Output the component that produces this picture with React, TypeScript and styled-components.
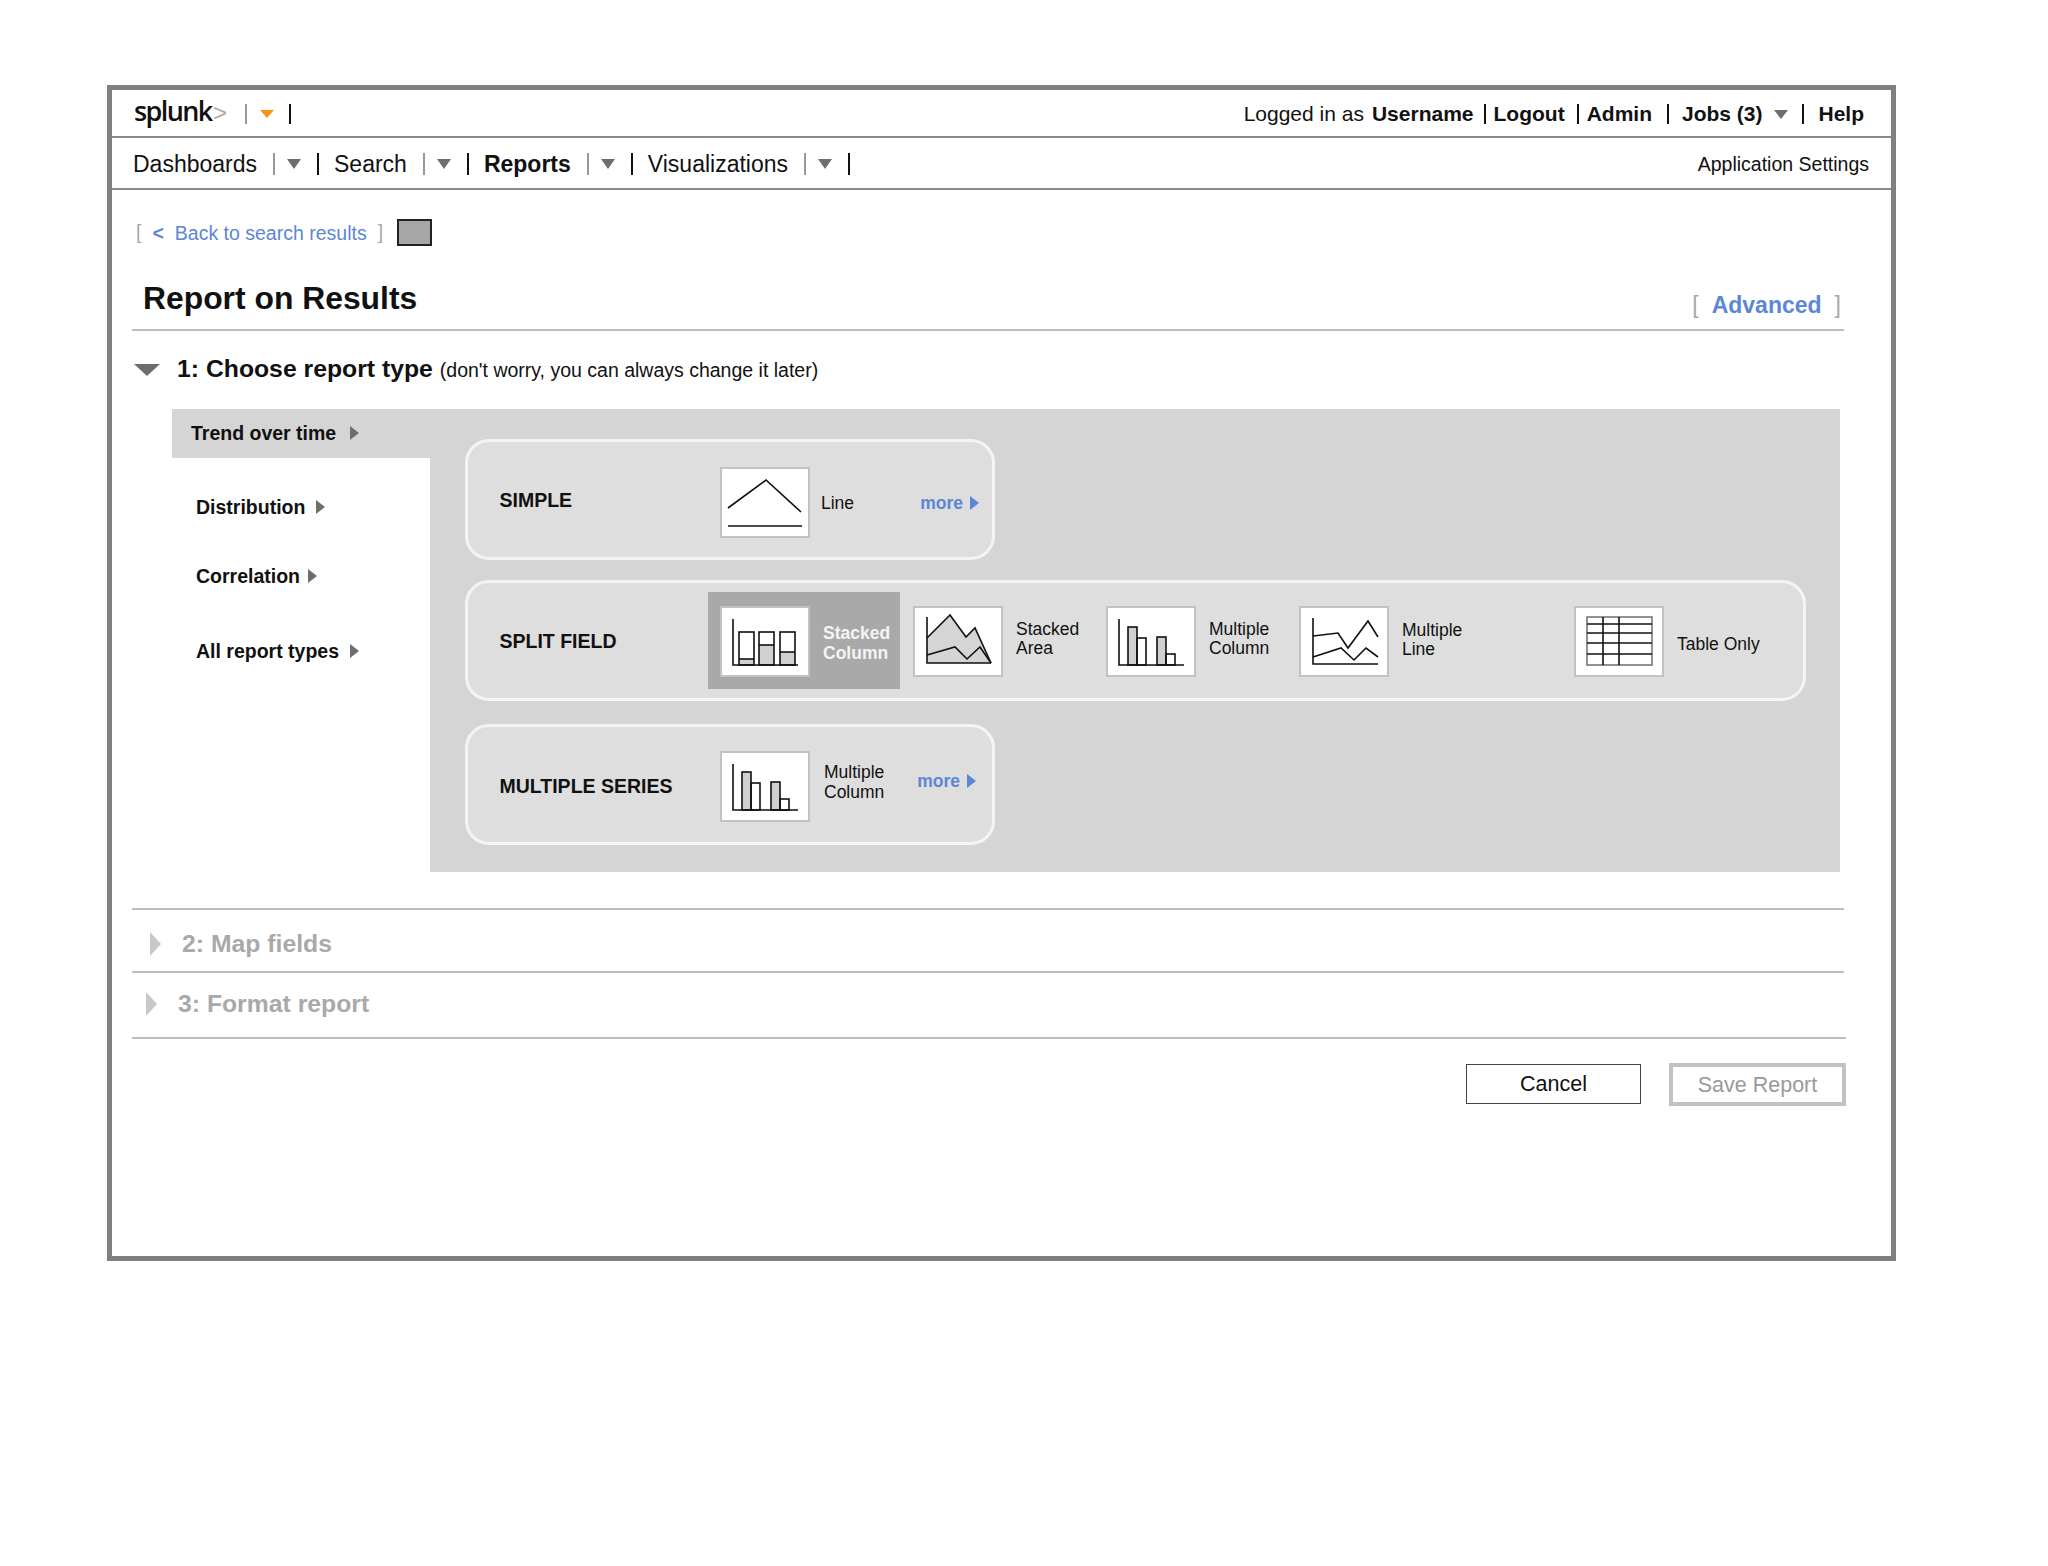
import React from 'react'
import styled, { createGlobalStyle } from 'styled-components'

const GlobalStyle = createGlobalStyle`
    html, body {
        margin: 0;
        padding: 0;
        background: #fff;
        font-family: "Liberation Sans", Arial, sans-serif;
        color: #111;
    }
`

const Page = styled.div`
    padding: 85px 0 0 107px;
    height: 1481px;
`
const Frame = styled.div`
    box-sizing: border-box;
    width: 1789px;
    height: 1176px;
    border: 5px solid #808080;
    display: flex;
    flex-direction: column;
    background: #fff;
`
const TopBar = styled.div`
    box-sizing: border-box;
    height: 48px;
    padding: 2px 27px 0 22px;
    border-bottom: 2px solid #8a8a8a;
    display: flex;
    align-items: center;
    justify-content: space-between;
`
const NavBar = styled.div`
    box-sizing: border-box;
    height: 52px;
    padding: 2px 22px 0 21px;
    border-bottom: 2px solid #8a8a8a;
    display: flex;
    align-items: center;
    justify-content: space-between;
`
const Row = styled.div`
    display: flex;
    align-items: center;
`
const Logo = styled.div`
    font-family: "Open Sans", sans-serif;
    font-size: 27px;
    font-weight: 600;
    letter-spacing: -1.6px;
    line-height: 32px;
    color: #111;
    width: 79px;
    margin-top: -6px;
`
const LogoMark = styled.span`
    font-family: "Liberation Sans", sans-serif;
    font-size: 24px;
    font-weight: 400;
    letter-spacing: 0;
    line-height: 32px;
    color: #aaa;
    width: 32px;
    margin-top: -2px;
`
const Bar = styled.span<{ $l?: number; $r?: number; $h?: number; $grey?: boolean }>`
    display: inline-block;
    width: 2px;
    height: ${({ $h }) => $h ?? 20}px;
    margin-left: ${({ $l }) => $l ?? 0}px;
    margin-right: ${({ $r }) => $r ?? 0}px;
    background: ${({ $grey }) => ($grey ? '#999' : '#111')};
    flex: none;
`
const TriDown = styled.span<{ $w?: number; $h?: number; $color?: string; $l?: number; $r?: number; $t?: number }>`
    display: inline-block;
    flex: none;
    width: 0;
    height: 0;
    border-left: ${({ $w }) => ($w ?? 14) / 2}px solid transparent;
    border-right: ${({ $w }) => ($w ?? 14) / 2}px solid transparent;
    border-top: ${({ $h }) => $h ?? 9}px solid ${({ $color }) => $color ?? '#6e6e6e'};
    margin-left: ${({ $l }) => $l ?? 0}px;
    margin-right: ${({ $r }) => $r ?? 0}px;
    margin-top: ${({ $t }) => $t ?? 0}px;
`
const TriRight = styled.span<{ $w?: number; $h?: number; $color?: string; $l?: number; $r?: number }>`
    display: inline-block;
    flex: none;
    width: 0;
    height: 0;
    border-top: ${({ $h }) => ($h ?? 14) / 2}px solid transparent;
    border-bottom: ${({ $h }) => ($h ?? 14) / 2}px solid transparent;
    border-left: ${({ $w }) => $w ?? 9}px solid ${({ $color }) => $color ?? '#6e6e6e'};
    margin-left: ${({ $l }) => $l ?? 0}px;
    margin-right: ${({ $r }) => $r ?? 0}px;
`
const UserText = styled.span<{ $bold?: boolean; $l?: number }>`
    font-size: 21px;
    line-height: 26px;
    font-weight: ${({ $bold }) => ($bold ? 700 : 400)};
    margin-left: ${({ $l }) => $l ?? 0}px;
    white-space: nowrap;
`
const NavLabel = styled.span<{ $bold?: boolean }>`
    font-size: 23px;
    line-height: 28px;
    font-weight: ${({ $bold }) => ($bold ? 700 : 400)};
    white-space: nowrap;
`
const SettingsLink = styled.span`
    font-size: 19.5px;
    line-height: 24px;
    white-space: nowrap;
`
const Main = styled.div`
    padding: 29px 47px 0 20px;
    display: flex;
    flex-direction: column;
`
const BackRow = styled.div`
    display: flex;
    align-items: center;
    height: 27px;
    padding-left: 4px;
    font-size: 19.5px;
    color: #5b87d4;
`
const Bracket = styled.span<{ $size?: number }>`
    color: #a8a8a8;
    font-weight: 400;
    font-size: ${({ $size }) => $size ?? 19.5}px;
`
const BackCaret = styled.span`
    margin: 2px 11px 0 11px;
    font-weight: 700;
`
const BackLabel = styled.span`
    margin: 2px 11px 0 0;
    white-space: nowrap;
`
const Swatch = styled.span`
    box-sizing: border-box;
    width: 35px;
    height: 27px;
    margin-left: 14px;
    background: #a6a6a6;
    border: 2px solid #222;
`
const TitleRow = styled.div`
    margin-top: 34px;
    height: 49px;
    padding: 0 3px 0 11px;
    border-bottom: 2px solid #bdbdbd;
    display: flex;
    align-items: flex-start;
    justify-content: space-between;
`
const Title = styled.h1`
    margin: 0;
    font-size: 31.85px;
    line-height: 36px;
    font-weight: 700;
`
const AdvancedLink = styled.div`
    display: flex;
    align-items: center;
    gap: 13px;
    margin-top: 11px;
    line-height: 28px;
`
const AdvancedLabel = styled.span`
    font-size: 23px;
    font-weight: 700;
    color: #5b87d4;
`
const StepHead = styled.div`
    margin-top: 23px;
    height: 30px;
    padding-left: 2px;
    display: flex;
    align-items: center;
`
const StepTitle = styled.h2`
    margin: 0 0 0 17px;
    font-size: 24.75px;
    line-height: 30px;
    font-weight: 700;
    white-space: nowrap;
`
const StepNote = styled.span`
    margin-left: 7px;
    font-size: 19.5px;
    font-weight: 400;
`
const Chooser = styled.div`
    margin: 25px 4px 36px 40px;
    display: flex;
    height: 463px;
`
const TypeMenu = styled.div`
    width: 258px;
    flex: none;
`
const TypeItem = styled.div<{ $active?: boolean; $top?: number }>`
    display: flex;
    align-items: center;
    font-size: 19.5px;
    font-weight: 700;
    line-height: 24px;
    white-space: nowrap;
    margin-top: ${({ $top }) => $top ?? 0}px;
    padding-left: ${({ $active }) => ($active ? 19 : 24)}px;
    padding-bottom: ${({ $active }) => ($active ? 2 : 0)}px;
    box-sizing: border-box;
    height: ${({ $active }) => ($active ? 49 : 24)}px;
    background: ${({ $active }) => ($active ? '#d5d5d5' : 'transparent')};
`
const Panel = styled.div`
    flex: 1;
    background: #d5d5d5;
    padding: 30px 0 0 35px;
    display: flex;
    flex-direction: column;
    align-items: flex-start;
`
const Card = styled.div<{ $width: number; $height: number; $top?: number; $pad?: number }>`
    box-sizing: border-box;
    width: ${({ $width }) => $width}px;
    height: ${({ $height }) => $height}px;
    margin-top: ${({ $top }) => $top ?? 0}px;
    padding-right: ${({ $pad }) => $pad ?? 0}px;
    background: #dedede;
    border: 3px solid #f4f4f4;
    border-radius: 24px;
    display: flex;
    align-items: center;
`
const CardLabel = styled.div<{ $shift?: number }>`
    width: 240px;
    flex: none;
    padding-left: 31.5px;
    box-sizing: border-box;
    font-size: 19.5px;
    font-weight: 700;
    line-height: 24px;
    white-space: nowrap;
    margin-top: ${({ $shift }) => $shift ?? 0}px;
`
const Choice = styled.div<{ $width?: number; $selected?: boolean; $gap?: number; $shift?: number; $inset?: number }>`
    box-sizing: border-box;
    width: ${({ $width }) => ($width ? `${$width}px` : 'auto')};
    flex: none;
    height: 97px;
    padding-left: ${({ $inset }) => $inset ?? 13}px;
    margin-top: ${({ $shift }) => $shift ?? 0}px;
    display: flex;
    align-items: center;
    gap: ${({ $gap }) => $gap ?? 14}px;
    background: ${({ $selected }) => ($selected ? '#a9a9a9' : 'transparent')};
`
const Thumb = styled.div`
    box-sizing: border-box;
    width: 90px;
    height: 71px;
    flex: none;
    margin: 0 -1px -1px;
    background: #fff;
    border: 2px solid #c2c2c2;
    svg {
        display: block;
        margin: -1px;
    }
`
const ChoiceLabel = styled.span<{ $selected?: boolean; $shift?: number }>`
    font-size: 17.5px;
    line-height: 19.5px;
    margin-top: ${({ $shift }) => $shift ?? 0}px;
    font-weight: ${({ $selected }) => ($selected ? 700 : 400)};
    color: ${({ $selected }) => ($selected ? '#f4f4f4' : '#111')};
`
const MoreLink = styled.div<{ $shift?: number }>`
    margin-left: auto;
    margin-top: ${({ $shift }) => $shift ?? 0}px;
    display: flex;
    align-items: center;
    gap: 7px;
    font-size: 17.5px;
    font-weight: 700;
    color: #5b87d4;
`
const StepRow = styled.div<{ $height: number; $indent: number; $top?: number; $bottom?: number }>`
    box-sizing: border-box;
    height: ${({ $height }) => $height}px;
    padding: ${({ $top }) => $top ?? 0}px 0 ${({ $bottom }) => $bottom ?? 0}px ${({ $indent }) => $indent}px;
    border-top: 2px solid #bdbdbd;
    display: flex;
    align-items: center;
`
const MutedTitle = styled.span`
    margin-left: 21px;
    font-size: 24.75px;
    line-height: 30px;
    font-weight: 700;
    color: #a9a9a9;
`
const Actions = styled.div`
    border-top: 2px solid #bdbdbd;
    padding-top: 24px;
    margin-right: -2px;
    display: flex;
    align-items: center;
    justify-content: flex-end;
    gap: 28px;
`
const Button = styled.button<{ $disabled?: boolean }>`
    box-sizing: border-box;
    width: ${({ $disabled }) => ($disabled ? 177 : 175)}px;
    height: ${({ $disabled }) => ($disabled ? 43 : 40)}px;
    margin-top: ${({ $disabled }) => ($disabled ? 0 : -2)}px;
    background: #fff;
    padding: ${({ $disabled }) => ($disabled ? '1px 0 0' : '2px 0 0')};
    font-family: inherit;
    font-size: 21.5px;
    color: ${({ $disabled }) => ($disabled ? '#999' : '#111')};
    border: ${({ $disabled }) => ($disabled ? '4px solid #c2c2c2' : '1.5px solid #444')};
`

const Chart = ({ children }: { children: React.ReactNode }) => (
    <svg width="88" height="69" viewBox="0 0 88 69" fill="none" stroke="#111" strokeWidth="1.6">
        {children}
    </svg>
)

const LineIcon = () => (
    <Chart>
        <polyline points="7,40 45,12 80,44" />
        <line x1="7" y1="58" x2="81" y2="58" />
    </Chart>
)

const StackedColumnIcon = () => (
    <Chart>
        <rect x="18" y="52" width="15" height="6" fill="#d0d0d0" stroke="none" />
        <rect x="38" y="38" width="15" height="20" fill="#d0d0d0" stroke="none" />
        <rect x="59" y="45" width="15" height="13" fill="#d0d0d0" stroke="none" />
        <polyline points="12,12 12,58 77,58" />
        <rect x="18" y="25" width="15" height="33" />
        <rect x="38" y="25" width="15" height="33" />
        <rect x="59" y="25" width="15" height="33" />
        <line x1="18" y1="52" x2="33" y2="52" />
        <line x1="38" y1="38" x2="53" y2="38" />
        <line x1="59" y1="45" x2="74" y2="45" />
    </Chart>
)

const StackedAreaIcon = () => (
    <Chart>
        <polygon points="13,31 36,8 52,30 61,21 77,56 13,56" fill="#d5d5d5" stroke="none" />
        <polyline points="13,10 13,56 77,56" />
        <polyline points="13,31 36,8 52,30 61,21 77,56" />
        <polyline points="13,48 41,40 53,52 66,40 77,56" />
    </Chart>
)

const MultipleColumnIcon = () => (
    <Chart>
        <rect x="21" y="20" width="9" height="38" fill="#d0d0d0" />
        <rect x="30" y="31" width="9" height="27" />
        <rect x="50" y="30" width="9" height="28" fill="#d0d0d0" />
        <rect x="59" y="47" width="9" height="11" />
        <polyline points="12,12 12,58 77,58" />
    </Chart>
)

const MultipleLineIcon = () => (
    <Chart>
        <polyline points="13,11 13,57 78,57" />
        <polyline points="13,29 38,26 48,41 68,14 78,30" />
        <polyline points="13,50 41,41 54,53 66,41 78,50" />
    </Chart>
)

const TableIcon = () => (
    <Chart>
        <rect x="12" y="10" width="65" height="48" stroke="#777" />
        <line x1="12" y1="17" x2="77" y2="17" />
        <line x1="12" y1="26" x2="77" y2="26" />
        <line x1="12" y1="36" x2="77" y2="36" />
        <line x1="12" y1="47" x2="77" y2="47" />
        <line x1="28" y1="10" x2="28" y2="58" />
        <line x1="44" y1="10" x2="44" y2="58" />
    </Chart>
)

const navItems = [
    { label: 'Dashboards' },
    { label: 'Search' },
    { label: 'Reports', bold: true },
    { label: 'Visualizations' },
]

const menuItems = [
    { label: 'Trend over time', active: true, gap: 14 },
    { label: 'Distribution', top: 37, gap: 11 },
    { label: 'Correlation', top: 45, gap: 8 },
    { label: 'All report types', top: 51, gap: 11 },
]

const App = () => {
    return (
        <Page>
            <GlobalStyle />
            <Frame>
                <TopBar>
                    <Row>
                        <Logo>splunk</Logo>
                        <LogoMark>&gt;</LogoMark>
                        <Bar $grey />
                        <TriDown $w={14} $h={8} $color="#f7941d" $l={13} $r={15} />
                        <Bar />
                    </Row>
                    <Row>
                        <UserText>Logged in as</UserText>
                        <UserText $bold $l={8}>Username</UserText>
                        <Bar $l={10} $r={8} />
                        <UserText $bold>Logout</UserText>
                        <Bar $l={12} $r={8} />
                        <UserText $bold>Admin</UserText>
                        <Bar $l={15} $r={13} />
                        <UserText $bold>Jobs (3)</UserText>
                        <TriDown $w={14} $h={9} $l={12} />
                        <Bar $l={14} $r={14} />
                        <UserText $bold>Help</UserText>
                    </Row>
                </TopBar>
                <NavBar>
                    <Row>
                        {navItems.map((item) => (
                            <React.Fragment key={item.label}>
                                <NavLabel $bold={item.bold}>{item.label}</NavLabel>
                                <Bar $grey $l={16} $h={22} />
                                <TriDown $w={14} $h={10} $l={12} />
                                <Bar $l={16} $r={15} $h={22} />
                            </React.Fragment>
                        ))}
                    </Row>
                    <SettingsLink>Application Settings</SettingsLink>
                </NavBar>
                <Main>
                    <BackRow>
                        <Bracket>[</Bracket>
                        <BackCaret>&lt;</BackCaret>
                        <BackLabel>Back to search results</BackLabel>
                        <Bracket>]</Bracket>
                        <Swatch />
                    </BackRow>
                    <TitleRow>
                        <Title>Report on Results</Title>
                        <AdvancedLink>
                            <Bracket $size={23}>[</Bracket>
                            <AdvancedLabel>Advanced</AdvancedLabel>
                            <Bracket $size={23}>]</Bracket>
                        </AdvancedLink>
                    </TitleRow>
                    <StepHead>
                        <TriDown $w={26} $h={12} $t={2} />
                        <StepTitle>
                            1: Choose report type
                            <StepNote>(don't worry, you can always change it later)</StepNote>
                        </StepTitle>
                    </StepHead>
                    <Chooser>
                        <TypeMenu>
                            {menuItems.map((item) => (
                                <TypeItem key={item.label} $active={item.active} $top={item.top}>
                                    {item.label}
                                    <TriRight $l={item.gap} />
                                </TypeItem>
                            ))}
                        </TypeMenu>
                        <Panel>
                            <Card $width={530} $height={121} $pad={13}>
                                <CardLabel>SIMPLE</CardLabel>
                                <Choice $shift={5} $gap={12}>
                                    <Thumb><LineIcon /></Thumb>
                                    <ChoiceLabel $shift={3}>Line</ChoiceLabel>
                                </Choice>
                                <MoreLink $shift={7}>more<TriRight $w={9} $h={14} $color="#5b87d4" /></MoreLink>
                            </Card>
                            <Card $width={1341} $height={121} $top={20}>
                                <CardLabel>SPLIT FIELD</CardLabel>
                                <Choice $width={192} $selected>
                                    <Thumb><StackedColumnIcon /></Thumb>
                                    <ChoiceLabel $selected $shift={6}>Stacked<br />Column</ChoiceLabel>
                                </Choice>
                                <Choice $width={194} $inset={14}>
                                    <Thumb><StackedAreaIcon /></Thumb>
                                    <ChoiceLabel $shift={-3}>Stacked<br />Area</ChoiceLabel>
                                </Choice>
                                <Choice $width={193}>
                                    <Thumb><MultipleColumnIcon /></Thumb>
                                    <ChoiceLabel $shift={-3}>Multiple<br />Column</ChoiceLabel>
                                </Choice>
                                <Choice $width={275}>
                                    <Thumb><MultipleLineIcon /></Thumb>
                                    <ChoiceLabel $shift={-1}>Multiple<br />Line</ChoiceLabel>
                                </Choice>
                                <Choice>
                                    <Thumb><TableIcon /></Thumb>
                                    <ChoiceLabel $shift={9}>Table Only</ChoiceLabel>
                                </Choice>
                            </Card>
                            <Card $width={530} $height={121} $top={23} $pad={16}>
                                <CardLabel $shift={2}>MULTIPLE SERIES</CardLabel>
                                <Choice $shift={2} $gap={15}>
                                    <Thumb><MultipleColumnIcon /></Thumb>
                                    <ChoiceLabel $shift={-6}>Multiple<br />Column</ChoiceLabel>
                                </Choice>
                                <MoreLink $shift={-7}>more<TriRight $w={9} $h={14} $color="#5b87d4" /></MoreLink>
                            </Card>
                        </Panel>
                    </Chooser>
                    <StepRow $height={63} $indent={18} $top={6}>
                        <TriRight $w={11} $h={24} $color="#c8c8c8" />
                        <MutedTitle>2: Map fields</MutedTitle>
                    </StepRow>
                    <StepRow $height={66} $indent={14} $bottom={3}>
                        <TriRight $w={11} $h={24} $color="#c8c8c8" />
                        <MutedTitle>3: Format report</MutedTitle>
                    </StepRow>
                    <Actions>
                        <Button>Cancel</Button>
                        <Button $disabled>Save Report</Button>
                    </Actions>
                </Main>
            </Frame>
        </Page>
    )
}

export default App
